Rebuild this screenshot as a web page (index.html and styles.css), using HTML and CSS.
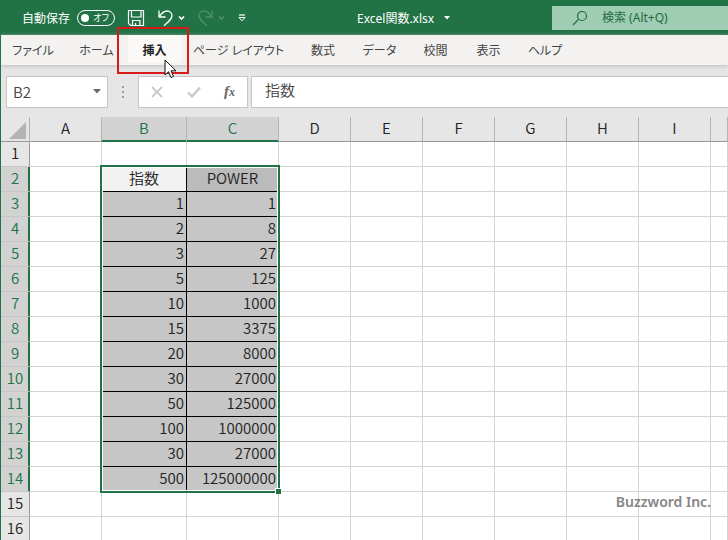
FILE: index.html
```html
<!DOCTYPE html>
<html lang="ja">
<head>
<meta charset="utf-8">
<title>Excel関数.xlsx</title>
<link rel="stylesheet" href="styles.css">
</head>
<body>
<header class="titlebar">
  <label class="autosave">自動保存
    <span class="switch"><input type="checkbox"><span class="switch-text">オフ</span></span>
  </label>
  <div class="quick">
    <button class="icon-btn" aria-label="上書き保存"><svg width="18" height="18" viewBox="0 0 18 18" fill="none" stroke="#fff" stroke-width="1.2"><path d="M1.500 1.500h15v15h-13l-2-2z"/><path d="M4.500 1.500v6.500h9.500v-6.500M5.500 16.500v-5h7.500v5M8.500 16.500v-2.500"/></svg></button>
    <button class="icon-btn undo" aria-label="元に戻す"><svg width="28" height="18" viewBox="0 0 28 18" fill="none" stroke="#fff" stroke-width="1.3"><path d="M2 1.500v6.500h6.500M2.200 7.800C5 3.500 7.500 2 10 2c3 0 5 2.200 5 4.800 0 3-2.500 5.200-8 10"/><path d="M22 7.500l2.500 2.500L27 7.500" stroke-width="1.700"/></svg></button>
    <button class="icon-btn redo" aria-label="やり直し"><svg width="28" height="18" viewBox="0 0 28 18" fill="none" stroke="#4d9069" stroke-width="1.300"><path d="M15 1.500v6.500H8.500M14.800 7.800C12 3.500 9.500 2 7 2 4 2 2 4.200 2 6.800c0 3 2.500 5.200 8 10"/><path d="M22 7.500l2.500 2.500L27 7.500" stroke-width="1.700"/></svg></button>
    <button class="icon-btn more" aria-label="クイック アクセスのカスタマイズ"><svg width="8" height="8" viewBox="0 0 8 8"><path d="M1 1h6" stroke="#fff" stroke-width="1.200"/><path d="M1 3.500h6L4 6.800z" fill="none" stroke="#fff"/></svg></button>
  </div>
  <button class="docname">Excel関数.xlsx<svg width="6" height="4" viewBox="0 0 6 4"><path d="M0 0h6L3 3.500z" fill="#fff"/></svg></button>
  <label class="search">
    <svg width="16" height="16" viewBox="0 0 16 16" fill="none" stroke="#1e6b41" stroke-width="1.200"><circle cx="10" cy="6" r="4.500"/><path d="M6.800 9.200L1 15"/></svg>
    <input type="search" placeholder="検索 (Alt+Q)" aria-label="検索">
  </label>
</header>
<nav class="tabs">
  <button>ファイル</button>
  <button>ホーム</button>
  <button class="active">挿入</button>
  <button>ページ レイアウト</button>
  <button>数式</button>
  <button>データ</button>
  <button>校閲</button>
  <button>表示</button>
  <button>ヘルプ</button>
</nav>
<section class="formula-bar">
  <div class="namebox">
    <input value="B2" aria-label="名前ボックス">
    <button aria-label="名前の一覧"><svg width="8" height="5" viewBox="0 0 8 5"><path d="M0 0h8L4 4.500z" fill="#6a6a6a"/></svg></button>
  </div>
  <svg class="grip" width="2" height="12" viewBox="0 0 2 12" fill="#9a9a9a"><path d="M0 0h2v2H0zM0 5h2v2H0zM0 10h2v2H0z"/></svg>
  <div class="fx-buttons">
    <button aria-label="キャンセル"><svg width="12" height="12" viewBox="0 0 12 12" stroke="#c9c9c9" stroke-width="1.800"><path d="M1 1l10 10M11 1L1 11"/></svg></button>
    <button aria-label="入力"><svg width="14" height="12" viewBox="0 0 14 12" fill="none" stroke="#c9c9c9" stroke-width="2.400"><path d="M1 6.500l4 3.800L13 1.500"/></svg></button>
    <button class="fx" aria-label="関数の挿入">f<span>x</span></button>
  </div>
  <input class="formula" value="指数" aria-label="数式バー">
</section>
<main class="sheet">
  <table>
    <colgroup><col class="c-head"><col class="c-std"><col class="c-b"><col class="c-c"><col class="c-std"><col class="c-std"><col class="c-std"><col class="c-std"><col class="c-std"><col class="c-std"><col></colgroup>
    <thead>
      <tr><th class="corner"><svg width="17" height="17" viewBox="0 0 17 17"><path d="M17 0v17H0z" fill="#b3b3b3"/></svg></th><th>A</th><th class="on">B</th><th class="on">C</th><th>D</th><th>E</th><th>F</th><th>G</th><th>H</th><th>I</th><th></th></tr>
    </thead>
    <tbody>
      <tr><th>1</th><td></td><td></td><td></td><td></td><td></td><td></td><td></td><td></td><td></td><td></td></tr>
      <tr><th class="on">2</th><td></td><td class="sel title current">指数</td><td class="sel title">POWER</td><td></td><td></td><td></td><td></td><td></td><td></td><td></td></tr>
      <tr><th class="on">3</th><td></td><td class="sel">1</td><td class="sel">1</td><td></td><td></td><td></td><td></td><td></td><td></td><td></td></tr>
      <tr><th class="on">4</th><td></td><td class="sel">2</td><td class="sel">8</td><td></td><td></td><td></td><td></td><td></td><td></td><td></td></tr>
      <tr><th class="on">5</th><td></td><td class="sel">3</td><td class="sel">27</td><td></td><td></td><td></td><td></td><td></td><td></td><td></td></tr>
      <tr><th class="on">6</th><td></td><td class="sel">5</td><td class="sel">125</td><td></td><td></td><td></td><td></td><td></td><td></td><td></td></tr>
      <tr><th class="on">7</th><td></td><td class="sel">10</td><td class="sel">1000</td><td></td><td></td><td></td><td></td><td></td><td></td><td></td></tr>
      <tr><th class="on">8</th><td></td><td class="sel">15</td><td class="sel">3375</td><td></td><td></td><td></td><td></td><td></td><td></td><td></td></tr>
      <tr><th class="on">9</th><td></td><td class="sel">20</td><td class="sel">8000</td><td></td><td></td><td></td><td></td><td></td><td></td><td></td></tr>
      <tr><th class="on">10</th><td></td><td class="sel">30</td><td class="sel">27000</td><td></td><td></td><td></td><td></td><td></td><td></td><td></td></tr>
      <tr><th class="on">11</th><td></td><td class="sel">50</td><td class="sel">125000</td><td></td><td></td><td></td><td></td><td></td><td></td><td></td></tr>
      <tr><th class="on">12</th><td></td><td class="sel">100</td><td class="sel">1000000</td><td></td><td></td><td></td><td></td><td></td><td></td><td></td></tr>
      <tr><th class="on">13</th><td></td><td class="sel">30</td><td class="sel">27000</td><td></td><td></td><td></td><td></td><td></td><td></td><td></td></tr>
      <tr><th class="on">14</th><td></td><td class="sel">500</td><td class="sel">125000000</td><td></td><td></td><td></td><td></td><td></td><td></td><td></td></tr>
      <tr><th>15</th><td></td><td></td><td></td><td></td><td></td><td></td><td></td><td></td><td></td><td></td></tr>
      <tr><th>16</th><td></td><td></td><td></td><td></td><td></td><td></td><td></td><td></td><td></td><td></td></tr>
    </tbody>
  </table>
  <div class="selection"><span class="handle"></span></div>
</main>
<div class="callout"></div>
<svg class="cursor" width="13" height="20" viewBox="0 0 13 20"><path d="M1 1v15l3.500-3.200L7 18.500l2.500-1.200L7 11.800h5z" fill="#fff" stroke="#111" stroke-linejoin="round"/></svg>
<div class="credit">Buzzword Inc.</div>
</body>
</html>
```

FILE: styles.css
```css
* { box-sizing: border-box; }

body {
  position: relative;
  display: flex;
  flex-direction: column;
  height: 100vh;
  margin: 0;
  overflow: hidden;
  background: #e6e6e6;
  color: #444;
  font: 12px "Noto Sans", "Noto Sans CJK JP", sans-serif;
  font-feature-settings: "palt";
}

button, input { margin: 0; font: inherit; font-feature-settings: inherit; color: inherit; }
button { padding: 0; border: 0; background: none; white-space: nowrap; }
input { min-width: 0; border: 0; outline: 0; background: none; }
svg { display: block; flex: none; }

/* Title bar */
.titlebar {
  display: grid;
  grid-template-columns: 116px 237px 199px minmax(0, 1fr);
  align-items: center;
  flex: none;
  height: 35px;
  background: #217346;
  color: #fff;
}
.autosave { display: flex; align-items: center; gap: 7px; padding-left: 22px; white-space: nowrap; }
.switch {
  display: flex;
  align-items: center;
  justify-content: space-between;
  width: 38px;
  height: 16px;
  padding: 0 5px 0 3px;
  border: 1px solid #fff;
  border-radius: 8px;
  font-size: 9px;
}
.switch input { appearance: none; width: 8px; height: 8px; border-radius: 50%; background: #fff; }
.quick { display: flex; align-items: center; gap: 12px; padding: 1px 0 0 11px; }
.more { margin-left: 1px; }
.docname { display: flex; align-items: center; gap: 10px; padding-left: 4px; }
.search {
  display: flex;
  align-items: center;
  gap: 14px;
  height: 24px;
  padding-left: 20px;
  background: #9fcdb3;
  color: #1e6b41;
}
.search input { flex: 1; width: 0; padding: 0; }
.search input::placeholder { color: #1e6b41; opacity: 1; }

/* Ribbon tabs */
.tabs {
  display: grid;
  grid-template-columns: 64px 63px 53px 115px 54px 59px 53px 53px 60px;
  flex: none;
  height: 30px;
  border-left: 1px solid #217346;
  background: #f3f2f1;
  box-shadow: 0 1px 4px #bbb;
}
.tabs button { height: 28px; padding-top: 2px; }
.tabs .active { background: #faf9f8; color: #222; font-weight: 700; }

/* Formula bar */
.formula-bar {
  display: flex;
  align-items: center;
  flex: none;
  height: 52px;
  padding: 1px 0 0 5px;
  border-left: 1px solid #217346;
  font: 350 15px "Noto Sans CJK JP", sans-serif;
}
.namebox, .fx-buttons, .formula { height: 32px; border: 1px solid #c6c6c6; background: #fff; }
.namebox { display: flex; align-items: center; width: 102px; padding: 0 6px; }
.namebox input { flex: 1; padding: 0; }
.grip { margin: 0 14px; }
.fx-buttons { display: flex; align-items: center; justify-content: space-between; width: 110px; padding: 0 12px; }
.fx { color: #666; font: italic 700 15px "Liberation Serif", serif; }
.fx span { font-size: 12px; }
.formula { flex: 1; margin-left: 3px; padding: 0 13px 4px; border-right: 0; }

/* Worksheet grid */
.sheet { position: relative; flex: none; border-left: 1px solid #217346; }
table {
  width: 100%;
  border-spacing: 0;
  table-layout: fixed;
  background: #fff;
  font: 350 15px/20px "Noto Sans CJK JP", sans-serif;
  font-feature-settings: normal;
}
.c-head { width: 29px; }
.c-std { width: 72px; }
.c-b { width: 85px; }
.c-c { width: 92px; }
th, td {
  height: 25px;
  padding: 0 0 2px;
  border-right: 1px solid #d4d4d4;
  border-bottom: 1px solid #d4d4d4;
}
th { background: #e6e6e6; color: #222; font-weight: 350; }
thead th {
  border-right-color: #b4b4b4;
  border-bottom-color: #999;
}
tbody th { border-right-color: #999; border-bottom-color: #c6c6c6; }
.corner { padding: 0; }
.corner svg { margin: 3px 0 0 8px; }
th.on { background: #d2d2d2; color: #217346; }
thead .on { box-shadow: inset 0 -1px #217346; border-bottom-color: #217346; }
tbody .on { box-shadow: inset -1px 0 #217346; border-right-color: #217346; }
.sel {
  padding-right: 2px;
  border-color: #000;
  background: #c6c6c6;
  color: #222;
  text-align: right;
}
.title { padding-right: 0; background: #bbb; text-align: center; }
.current { background: #f2f2f2; }

.selection {
  position: absolute;
  left: 99px;
  top: 48px;
  width: 180px;
  height: 328px;
  border: 2px solid #217346;
  box-shadow: inset 0 0 0 1px #fff;
}
.handle {
  position: absolute;
  right: -3px;
  bottom: -3px;
  width: 6px;
  height: 6px;
  border: solid #fff;
  border-width: 1px 0 0 1px;
  background: #217346;
}

/* Tutorial annotations */
.callout {
  position: absolute;
  left: 117px;
  top: 27px;
  width: 72px;
  height: 47px;
  border: 2px solid #d91a1a;
}
.cursor { position: absolute; left: 164px; top: 59px; }
.credit {
  position: absolute;
  right: 17px;
  bottom: 28px;
  color: #858585;
  font-size: 14px;
  line-height: 20px;
  font-weight: 600;
}
```
